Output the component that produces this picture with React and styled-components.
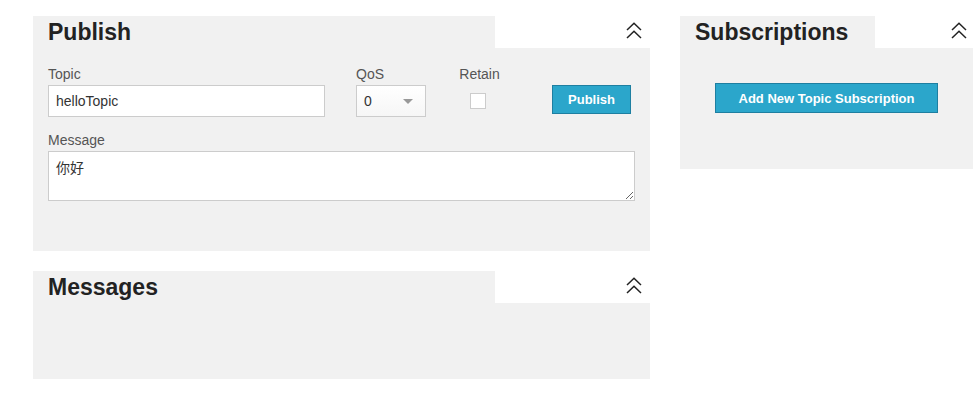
import styled, { createGlobalStyle } from 'styled-components';

const GlobalStyle = createGlobalStyle`
  body {
    margin: 0;
    background: #ffffff;
    font-family: 'Liberation Sans', Arial, 'Noto Sans CJK SC', sans-serif;
    overflow: hidden;
  }
`;

const Page = styled.div`
  display: flex;
  align-items: flex-start;
  gap: 30px;
  padding: 16px 0 0 33px;
`;

const Column = styled.div`
  display: flex;
  flex-direction: column;
  gap: 20px;
  width: ${(p) => p.$width}px;
  flex-shrink: 0;
`;

const Panel = styled.section`
  background: #f1f1f1;
`;

const PanelHeader = styled.header`
  display: flex;
  height: 32px;
`;

const Title = styled.h2`
  margin: 0;
  width: ${(p) => p.$tab}px;
  padding-left: 15px;
  box-sizing: border-box;
  background: #f1f1f1;
  font-size: 23px;
  line-height: 33px;
  font-weight: bold;
  color: #222;
`;

const HeaderFill = styled.div`
  flex: 1;
  background: #ffffff;
  display: flex;
  justify-content: flex-end;
  align-items: flex-start;
  padding: 6px ${(p) => p.$pad || 8}px 0 0;
`;

const CollapseButton = styled.button`
  border: 0;
  background: none;
  padding: 0;
  width: 16px;
  height: 17px;
  cursor: pointer;
  display: block;

  svg {
    display: block;
  }
`;

const PanelBody = styled.div`
  padding: ${(p) => p.$pad};
  height: ${(p) => (p.$height ? `${p.$height}px` : 'auto')};
  box-sizing: border-box;
`;

const FormRow = styled.div`
  display: flex;
  align-items: flex-start;
`;

const Field = styled.div`
  display: flex;
  flex-direction: column;
  align-items: ${(p) => (p.$center ? 'center' : 'stretch')};
  width: ${(p) => (p.$width ? `${p.$width}px` : 'auto')};
  margin-left: ${(p) => p.$ml || 0}px;
  margin-top: ${(p) => p.$mt || 0}px;
`;

const Label = styled.label`
  font-size: 14px;
  line-height: 17px;
  color: #555;
  margin-bottom: 2px;
  white-space: nowrap;
`;

const TextInput = styled.input`
  height: 32px;
  box-sizing: border-box;
  border: 1px solid #cccccc;
  background: #ffffff;
  padding: 0 7px;
  font-family: inherit;
  font-size: 14px;
  color: #333;
  outline: none;
`;

const Select = styled.div`
  height: 32px;
  box-sizing: border-box;
  border: 1px solid #cccccc;
  background: linear-gradient(#ffffff, #f6f6f6);
  display: flex;
  align-items: center;
  justify-content: space-between;
  padding: 0 12px 0 7px;
  font-size: 14px;
  color: #333;
`;

const Caret = styled.span`
  width: 0;
  height: 0;
  border-left: 5px solid transparent;
  border-right: 5px solid transparent;
  border-top: 5px solid #999;
`;

const CheckBox = styled.span`
  display: block;
  width: 16px;
  height: 16px;
  box-sizing: border-box;
  border: 1px solid #cccccc;
  background: #ffffff;
  margin: 8px 3px 0 0;
`;

const ActionButton = styled.button`
  width: ${(p) => p.$width}px;
  height: ${(p) => p.$height}px;
  margin-left: ${(p) => p.$ml || 0}px;
  margin-top: ${(p) => p.$mt || 0}px;
  box-sizing: border-box;
  background: #2ba6cb;
  border: 1px solid #1e7fa1;
  color: #ffffff;
  font-family: inherit;
  font-size: 13px;
  font-weight: bold;
  padding: 0;
  cursor: pointer;
`;

const MessageArea = styled.textarea`
  display: block;
  width: 100%;
  height: 50px;
  box-sizing: border-box;
  border: 1px solid #cccccc;
  background: #ffffff;
  padding: 5px 7px;
  font-family: 'Liberation Sans', 'Noto Sans CJK SC', sans-serif;
  font-size: 14px;
  color: #333;
  outline: none;
`;

const Centered = styled.div`
  display: flex;
  justify-content: center;
`;

function Chevrons() {
  return (
    <svg width="16" height="17" viewBox="0 0 16 17">
      <polyline points="1,8 8,1.2 15,8" fill="none" stroke="#222" strokeWidth="1.5" />
      <polyline points="1,16 8,9.2 15,16" fill="none" stroke="#222" strokeWidth="1.5" />
    </svg>
  );
}

function PanelHead({ title, tab, pad }) {
  return (
    <PanelHeader>
      <Title $tab={tab}>{title}</Title>
      <HeaderFill $pad={pad}>
        <CollapseButton aria-label="collapse">
          <Chevrons />
        </CollapseButton>
      </HeaderFill>
    </PanelHeader>
  );
}

export default function App() {
  return (
    <>
      <GlobalStyle />
      <Page>
        <Column $width={617}>
          <Panel>
            <PanelHead title="Publish" tab={462} />
            <PanelBody $pad="18px 15px 50px 15px">
              <FormRow>
                <Field $width={277}>
                  <Label>Topic</Label>
                  <TextInput defaultValue="helloTopic" />
                </Field>
                <Field $width={70} $ml={31}>
                  <Label>QoS</Label>
                  <Select>
                    <span>0</span>
                    <Caret />
                  </Select>
                </Field>
                <Field $width={41} $ml={33} $center>
                  <Label>Retain</Label>
                  <CheckBox />
                </Field>
                <ActionButton $width={79} $height={29} $ml={52} $mt={19}>
                  Publish
                </ActionButton>
              </FormRow>
              <Field $mt={15}>
                <Label>Message</Label>
                <MessageArea defaultValue="你好" />
              </Field>
            </PanelBody>
          </Panel>
          <Panel>
            <PanelHead title="Messages" tab={462} />
            <PanelBody $height={76} />
          </Panel>
        </Column>
        <Column $width={293}>
          <Panel>
            <PanelHead title="Subscriptions" tab={195} pad={6} />
            <PanelBody $pad="35px 0 56px 0">
              <Centered>
                <ActionButton $width={223} $height={30}>
                  Add New Topic Subscription
                </ActionButton>
              </Centered>
            </PanelBody>
          </Panel>
        </Column>
      </Page>
    </>
  );
}
